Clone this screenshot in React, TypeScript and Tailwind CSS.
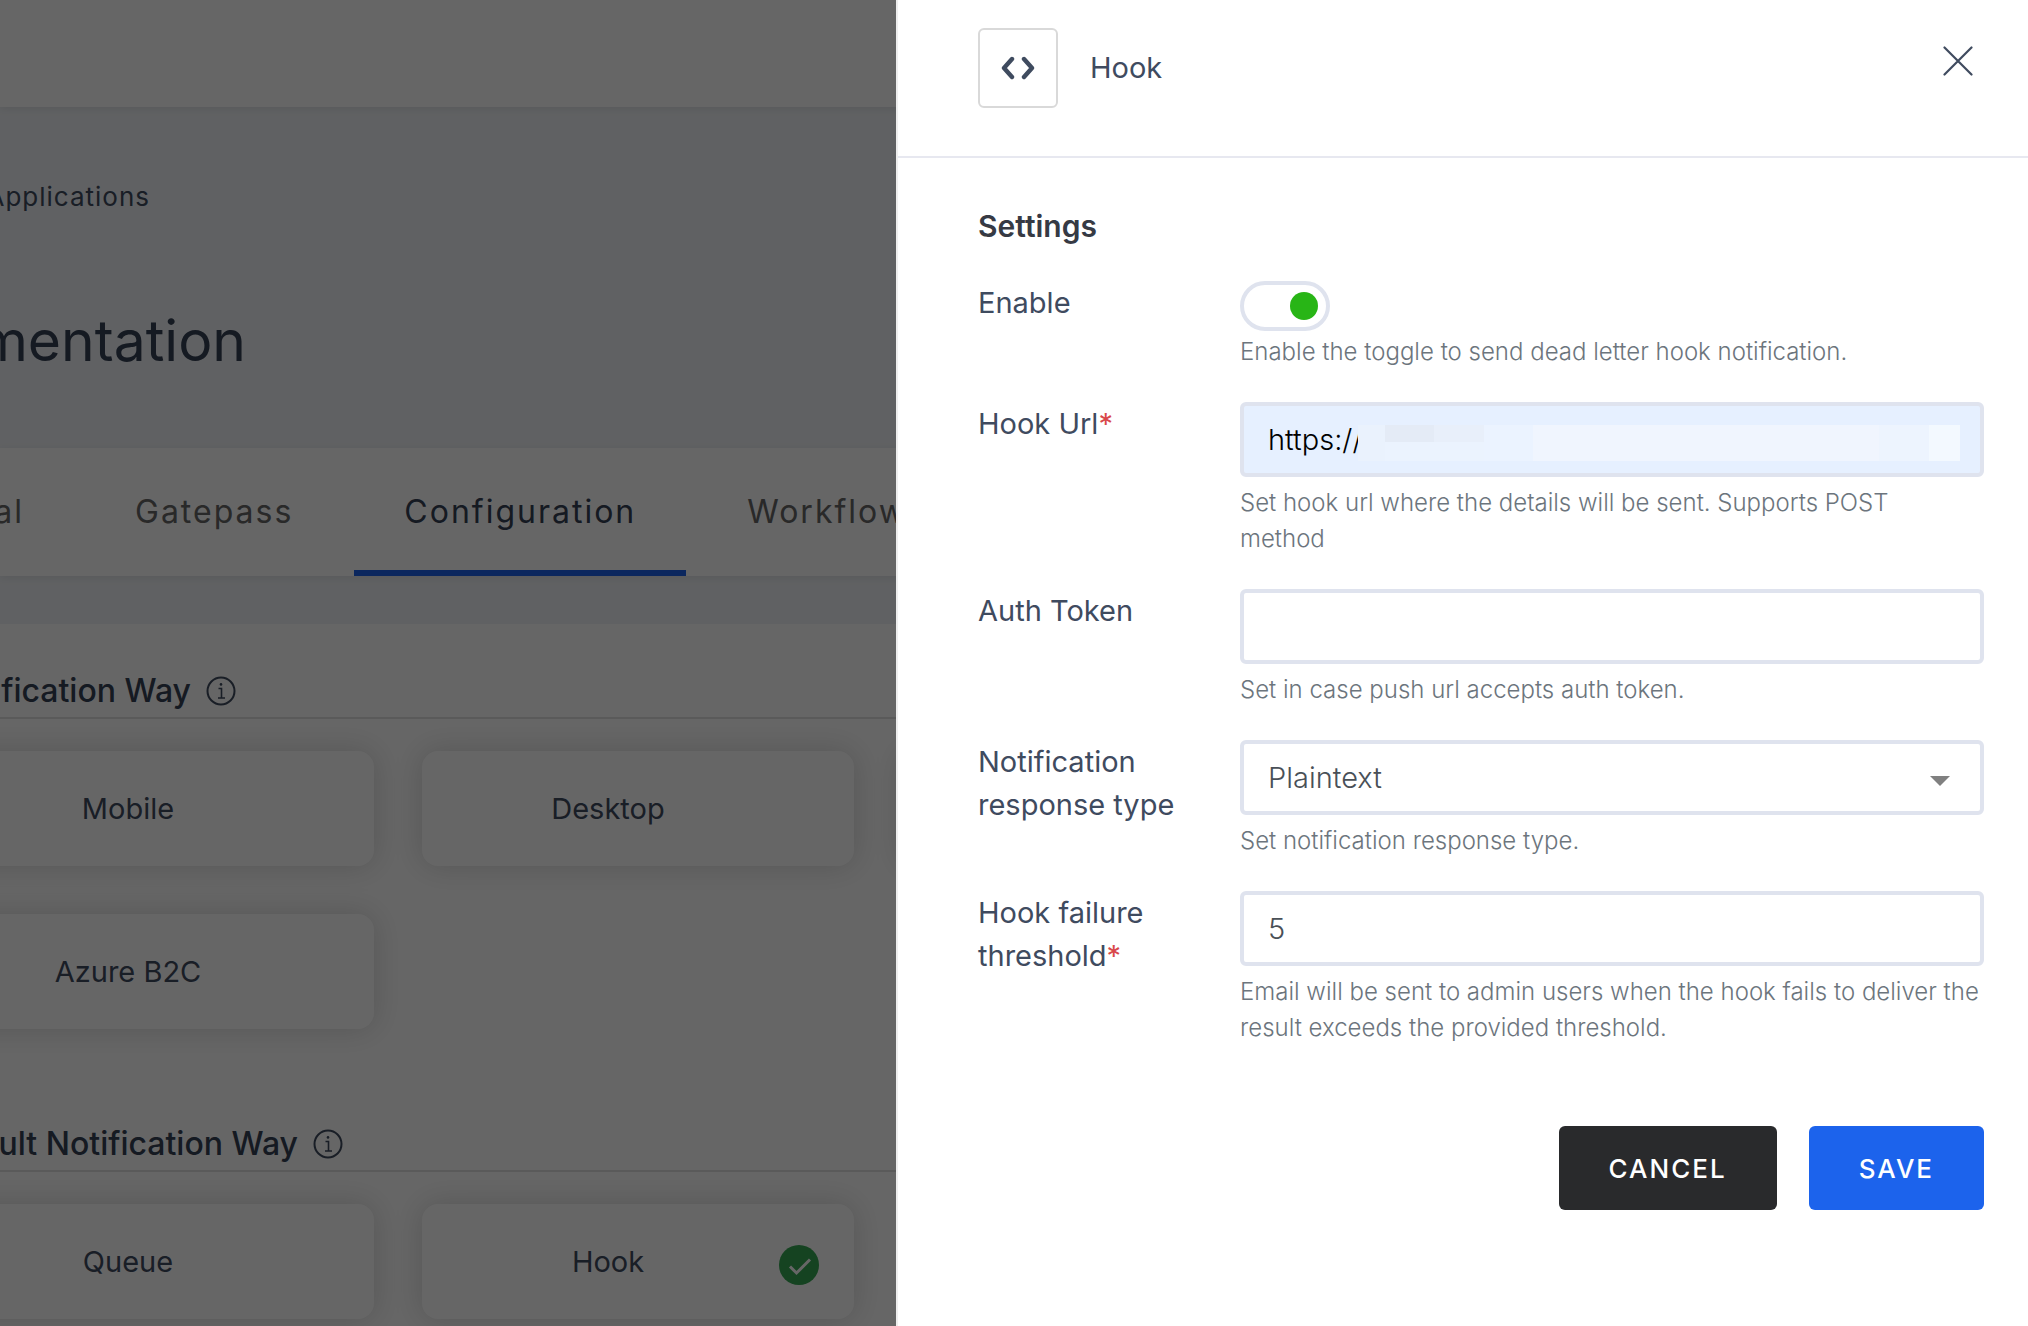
import React, { useState } from 'react'
import clsx from 'clsx'

interface NotificationCardProps {
  label: string;
  selected?: boolean;
}

interface FormRowProps {
  id: string;
  label: string;
  help: React.ReactNode;
  required?: boolean;
  children: React.ReactNode;
}

const TABS = ["al", "Gatepass", "Configuration", "Workflow"];

const FIELD_CLASS =
  "block h-[75px] w-full rounded-md border-4 border-[#dfe3ee] px-6 text-[29px] font-light outline-none";

const InfoIcon = () => (
  <svg width="30" height="30" viewBox="0 0 30 30" fill="none" stroke="#3f4b5f" strokeWidth="2" aria-hidden="true">
    <circle cx="15" cy="15" r="13.5" />
    <path d="M12.5 12.5H15.5V22M12 22H19" strokeWidth="1.6" />
    <circle cx="15" cy="8.4" r="1.3" fill="#3f4b5f" stroke="none" />
  </svg>
)

const CheckIcon = () => (
  <svg width="40" height="40" viewBox="0 0 40 40" fill="none" aria-hidden="true">
    <circle cx="20" cy="20" r="20" fill="#35a853" />
    <path d="M11 21.5L17.5 28L31 14.5" stroke="#fff" strokeWidth="3" />
  </svg>
)

const NotificationCard = ({ label, selected = false }: NotificationCardProps) => (
  <div className="flex h-[115px] w-[432px] shrink-0 items-center rounded-2xl bg-white pl-[15px] pr-[35px] shadow-[0_0_30px_rgba(0,0,0,0.16)]">
    <span className="flex-1 text-center text-[29px] text-[#3f4b5f]">{label}</span>
    <span className="w-10 pt-1.5">{selected && <CheckIcon />}</span>
  </div>
)

const SectionTitle = ({ title, className }: { title: string; className: string }) => (
  <div className="flex h-[95px] items-center border-b-2 border-[#e2e2e2] pt-10">
    <div className={clsx("flex justify-end overflow-hidden", className)}>
      <h2 className="whitespace-nowrap text-[32px] font-medium text-[#364155]">{title}</h2>
    </div>
    <button type="button" aria-label={`About ${title}`} className="ml-[15px]">
      <InfoIcon />
    </button>
  </div>
)

const FormRow = ({ id, label, help, required = false, children }: FormRowProps) => (
  <div className="flex">
    <label htmlFor={id} className="w-[262px] shrink-0 pr-10 text-[29px] leading-[43px] text-[#3f4b5f]">
      {label}
      {required && <span className="text-[#d9484a]">*</span>}
    </label>
    <div className="min-w-0 flex-1">
      {children}
      <p className="text-2xl font-[340] leading-9 text-[#6c757d]">{help}</p>
    </div>
  </div>
)

// Blocks drawn over the private part of the hook url
const UrlMask = () => (
  <div className="pointer-events-none absolute left-[118px] right-6 top-[23px]" aria-hidden="true">
    <div className="flex h-9 w-full bg-[#f0f5fe]">
      <div className="w-[27px] bg-[#eaf2fd]" />
      <div className="w-[49px] bg-[#ebf3fe]"><div className="h-[17px] bg-[#e4ebf6]" /></div>
      <div className="w-[50px] bg-[#ebf3fe]"><div className="h-[17px] bg-[#e8effa]" /></div>
      <div className="w-[49px] bg-[#ebf3ff]" />
      <div className="flex-1" />
      <div className="w-[50px] bg-[#edf4fe]" />
      <div className="w-[31px] bg-[#f3f9ff]" />
    </div>
  </div>
)

const ApplicationPage = () => (
  <main className="h-screen overflow-hidden bg-[#f0f3f7]">
    <div className="h-[107px] bg-white shadow-[0_2px_8px_rgba(0,0,0,0.08)]" />
    <div className="h-[341px] pt-[70px]">
      <div className="flex w-[150px] justify-end overflow-hidden">
        <a href="#applications" className="text-[26px] leading-10 tracking-[1px] text-[#3f4b5f]">Applications</a>
      </div>
      <div className="mt-[82px] flex w-[246px] justify-end overflow-hidden">
        <h1 className="text-[57px] leading-[84px] text-[#364155]">mentation</h1>
      </div>
    </div>
    <nav className="bg-white shadow-[0_2px_8px_rgba(0,0,0,0.08)]">
      <div className="-ml-[78px] flex gap-[11px]">
        {TABS.map((tab) => (
          <a
            key={tab}
            href={`#${tab}`}
            className={clsx(
              "flex h-32 min-w-[152px] items-center justify-end border-b-[6px] px-[50px] pt-1.5 text-[32px] tracking-[2px]",
              tab === "Configuration" ? "border-[#1c63ec] text-[#364155]" : "border-transparent text-[#666]"
            )}
          >
            {tab}
          </a>
        ))}
      </div>
    </nav>
    <section className="mt-12 bg-white pb-12">
      <SectionTitle title="ification Way" className="w-[191px]" />
      <div className="-ml-[58px] mt-8 flex flex-col gap-12">
        <div className="flex gap-12">
          <NotificationCard label="Mobile" />
          <NotificationCard label="Desktop" />
          <NotificationCard label="" />
        </div>
        <NotificationCard label="Azure B2C" />
      </div>
      <div className="mt-12">
        <SectionTitle title="ult Notification Way" className="w-[298px]" />
      </div>
      <div className="-ml-[58px] mt-8 flex gap-12">
        <NotificationCard label="Queue" />
        <NotificationCard label="Hook" selected />
      </div>
    </section>
  </main>
)

const HookDrawer = () => {
  const [enabled, setEnabled] = useState(true);
  const [hookUrl, setHookUrl] = useState("https://");
  const [token, setToken] = useState("");
  const [threshold, setThreshold] = useState("5");

  return (
    <aside className="fixed inset-y-0 right-0 w-[1132px] max-w-full overflow-y-auto border-l-2 border-[#eee] bg-white">
      <header className="flex h-[158px] items-start border-b-2 border-[#e7e8f0] pl-20 pr-[55px] pt-7">
        <div className="flex size-20 items-center justify-center rounded-md border-2 border-[#d9d9d9]">
          <svg width="34" height="24" viewBox="0 0 34 24" fill="none" stroke="#3f4b5f" strokeWidth="4.4" strokeLinecap="round" strokeLinejoin="round" aria-hidden="true">
            <path d="M11 3L3 12L11 21M23 3L31 12L23 21" />
          </svg>
        </div>
        <h2 className="ml-8 flex-1 text-[29px] leading-[80px] text-[#3f4b5f]">Hook</h2>
        <button type="button" aria-label="Close" className="mt-[18px]">
          <svg width="30" height="30" viewBox="0 0 30 30" fill="none" stroke="#3f4b5f" strokeWidth="2.2" strokeLinecap="round" aria-hidden="true">
            <path d="M1.5 1.5L28.5 28.5M28.5 1.5L1.5 28.5" />
          </svg>
        </button>
      </header>

      <form className="flex flex-col gap-8 pb-12 pl-20 pr-11 pt-[46px]" onSubmit={(e) => e.preventDefault()}>
        <h3 className="text-[30px] font-semibold leading-[45px] text-[#363a44]">Settings</h3>

        <FormRow id="enable" label="Enable" help="Enable the toggle to send dead letter hook notification.">
          <input
            id="enable"
            type="checkbox"
            checked={enabled}
            onChange={(e) => setEnabled(e.target.checked)}
            className="mb-[3px] flex h-[50px] w-[90px] appearance-none items-center rounded-full border-4 border-[#dfe3ee] bg-white px-2 before:size-7 before:rounded-full before:bg-gray-400 checked:justify-end checked:before:bg-[#28b516]"
          />
        </FormRow>

        <FormRow
          id="hook-url"
          label="Hook Url"
          required
          help={<>Set hook url where the details will be sent. Supports POST <br />method</>}
        >
          <div className="relative mb-2">
            <input
              id="hook-url"
              type="text"
              value={hookUrl}
              onChange={(e) => setHookUrl(e.target.value)}
              className={clsx(FIELD_CLASS, "bg-[#e6f0ff] text-black")}
            />
            <UrlMask />
          </div>
        </FormRow>

        <FormRow id="auth-token" label="Auth Token" help="Set in case push url accepts auth token.">
          <input
            id="auth-token"
            type="text"
            value={token}
            onChange={(e) => setToken(e.target.value)}
            className={clsx(FIELD_CLASS, "mb-2 bg-white text-[#495057]")}
          />
        </FormRow>

        <FormRow id="response-type" label="Notification response type" help="Set notification response type.">
          <div className="relative mb-2">
            <select id="response-type" className={clsx(FIELD_CLASS, "appearance-none bg-white text-[#495057]")}>
              <option>Plaintext</option>
            </select>
            <svg className="pointer-events-none absolute right-[34px] top-9" width="20" height="10" viewBox="0 0 20 10" aria-hidden="true">
              <path d="M0 0H20L10 10Z" fill="#808080" />
            </svg>
          </div>
        </FormRow>

        <FormRow
          id="threshold"
          label="Hook failure threshold"
          required
          help="Email will be sent to admin users when the hook fails to deliver the result exceeds the provided threshold."
        >
          <input
            id="threshold"
            type="text"
            value={threshold}
            onChange={(e) => setThreshold(e.target.value)}
            className={clsx(FIELD_CLASS, "mb-2 bg-white text-[#495057]")}
          />
        </FormRow>

        <div className="mt-12 flex justify-end gap-8">
          <button type="button" className="h-[84px] rounded-md bg-[#292a2c] px-[50px] text-[26px] font-medium tracking-[2px] text-white">
            CANCEL
          </button>
          <button type="submit" className="h-[84px] rounded-md bg-[#1c63ec] px-[50px] text-[26px] font-medium tracking-[2px] text-white">
            SAVE
          </button>
        </div>
      </form>
    </aside>
  )
}

const App = () => {
  return (
    <div className="font-['Inter',sans-serif]">
      <ApplicationPage />
      <div className="fixed inset-0 bg-black/60" />
      <HookDrawer />
    </div>
  )
}

export default App
